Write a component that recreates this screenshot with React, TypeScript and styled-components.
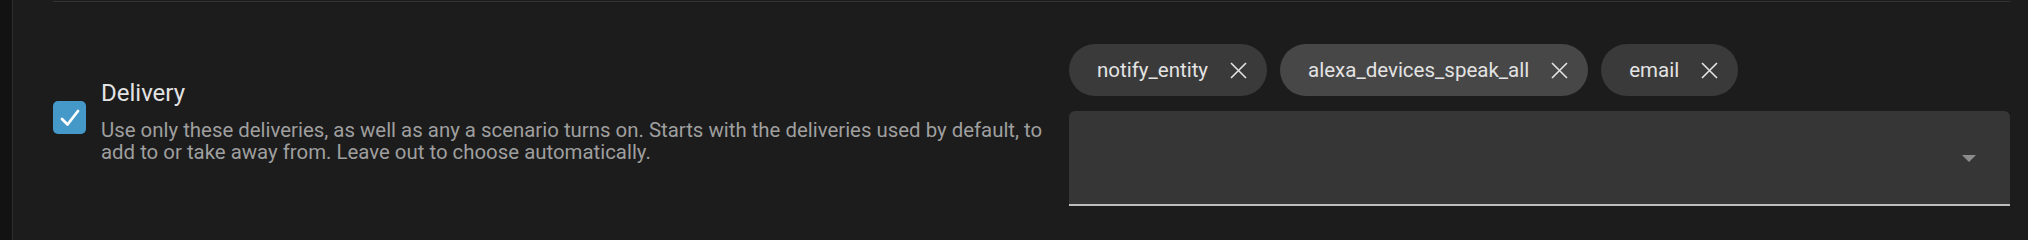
import React from "react";
import styled, { createGlobalStyle } from "styled-components";

const GlobalStyle = createGlobalStyle`
  html, body {
    margin: 0;
    padding: 0;
    background: #1c1c1c;
    font-family: Roboto, "Noto Sans", sans-serif;
  }
`;

const Page = styled.div`
  display: flex;
  min-height: 240px;
  background: #1c1c1c;
`;

const Rail = styled.div`
  width: 12px;
  flex: none;
  background: #121212;
  border-right: 1px solid #2e2e2e;
`;

const Main = styled.div`
  flex: 1;
  padding: 0 18px 0 40px;
  display: flex;
  flex-direction: column;
`;

const Divider = styled.div`
  margin-top: 1px;
  height: 1px;
  background: #333333;
`;

const Row = styled.div`
  display: flex;
  align-items: flex-start;
  justify-content: space-between;
`;

const LeftGroup = styled.div`
  display: flex;
  align-items: flex-start;
  gap: 15px;
  margin-top: 78px;
`;

const CheckBox = styled.div`
  width: 33px;
  height: 33px;
  flex: none;
  margin-top: 21px;
  border-radius: 5px;
  background: #4599c9;
  display: flex;
  align-items: center;
  justify-content: center;
`;

const TextBlock = styled.div`
  display: flex;
  flex-direction: column;
`;

const Title = styled.div`
  font-size: 24px;
  line-height: 26px;
  color: #e3e3e3;
`;

const Description = styled.div`
  margin-top: 13px;
  max-width: 960px;
  font-size: 20.4px;
  line-height: 22px;
  color: #9f9f9f;
`;

const FieldColumn = styled.div`
  width: 941px;
  flex: none;
  margin-top: 42px;
  display: flex;
  flex-direction: column;
  gap: 15px;
`;

const ChipList = styled.div`
  display: flex;
  gap: 13px;
`;

const Chip = styled.div<{ $active?: boolean }>`
  height: 52px;
  box-sizing: border-box;
  padding: 0 20px 0 28px;
  border-radius: 26px;
  display: flex;
  align-items: center;
  gap: 22px;
  background: ${(p) => (p.$active ? "#474747" : "#3a3a3a")};
  color: #e3e3e3;
  font-size: 20.5px;
  white-space: nowrap;
`;

const Field = styled.div`
  height: 95px;
  box-sizing: border-box;
  background: #363636;
  border-radius: 6px 6px 0 0;
  border-bottom: 2px solid #bdbdbd;
  display: flex;
  align-items: center;
  justify-content: flex-end;
  padding: 2px 34px 0 0;
`;

const CloseIcon = () => (
  <svg width="17" height="17" viewBox="0 0 17 17" aria-hidden>
    <path d="M1 1 L16 16 M16 1 L1 16" stroke="#e3e3e3" strokeWidth="1.6" fill="none" />
  </svg>
);

const CheckIcon = () => (
  <svg width="33" height="33" viewBox="0 0 33 33" aria-hidden>
    <polyline
      points="9,18 14.5,23.5 25,10"
      fill="none"
      stroke="#ffffff"
      strokeWidth="2.8"
      strokeLinecap="round"
      strokeLinejoin="round"
    />
  </svg>
);

const ArrowIcon = () => (
  <svg width="14" height="7" viewBox="0 0 14 7" aria-hidden>
    <path d="M0 0 L14 0 L7 7 Z" fill="#8c8c8c" />
  </svg>
);

const chips = [
  { label: "notify_entity", active: false },
  { label: "alexa_devices_speak_all", active: true },
  { label: "email", active: false },
];

export default function App() {
  return (
    <>
      <GlobalStyle />
      <Page>
        <Rail />
        <Main>
          <Divider />
          <Row>
            <LeftGroup>
              <CheckBox>
                <CheckIcon />
              </CheckBox>
              <TextBlock>
                <Title>Delivery</Title>
                <Description>
                  Use only these deliveries, as well as any a scenario turns on. Starts with the
                  deliveries used by default, to add to or take away from. Leave out to choose
                  automatically.
                </Description>
              </TextBlock>
            </LeftGroup>
            <FieldColumn>
              <ChipList>
                {chips.map((c) => (
                  <Chip key={c.label} $active={c.active}>
                    <span>{c.label}</span>
                    <CloseIcon />
                  </Chip>
                ))}
              </ChipList>
              <Field>
                <ArrowIcon />
              </Field>
            </FieldColumn>
          </Row>
        </Main>
      </Page>
    </>
  );
}
